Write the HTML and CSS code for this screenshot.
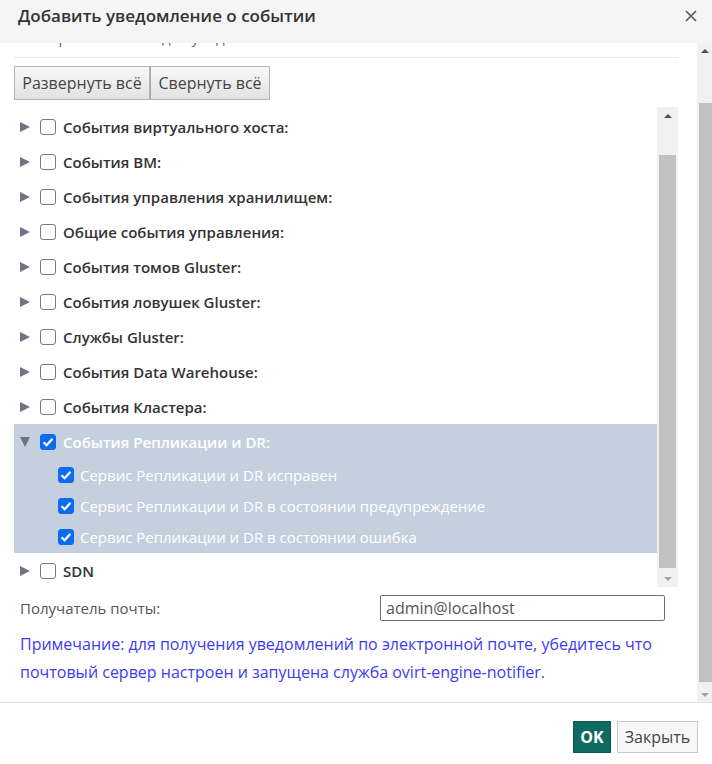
FILE: index.html
```html
<!DOCTYPE html>
<html lang="ru">
<head>
<meta charset="utf-8">
<title>Добавить уведомление о событии</title>
<link rel="stylesheet" href="styles.css">
</head>
<body>
<div class="dialog">
  <div class="header">
    <div class="title">Добавить уведомление о событии</div>
    <svg class="close" width="12" height="12" viewBox="0 0 12 12"><path d="M1 1L11 11M11 1L1 11" stroke="#5a5a5a" stroke-width="1.7" fill="none"/></svg>
  </div>
  <div class="body">
    <div class="content">
      <div class="intro"><span>Выберите события для уведомления:</span></div>
      <div class="rule"></div>
      <div class="btn-group">
        <button class="gbtn">Развернуть всё</button><button class="gbtn">Свернуть всё</button>
      </div>
      <div class="tree-box">
        <div class="tree">
          <div class="row"><span class="arrow right"></span><span class="cb"></span><span class="lbl">События виртуального хоста:</span></div>
          <div class="row"><span class="arrow right"></span><span class="cb"></span><span class="lbl">События ВМ:</span></div>
          <div class="row"><span class="arrow right"></span><span class="cb"></span><span class="lbl">События управления хранилищем:</span></div>
          <div class="row"><span class="arrow right"></span><span class="cb"></span><span class="lbl">Общие события управления:</span></div>
          <div class="row"><span class="arrow right"></span><span class="cb"></span><span class="lbl">События томов Gluster:</span></div>
          <div class="row"><span class="arrow right"></span><span class="cb"></span><span class="lbl">События ловушек Gluster:</span></div>
          <div class="row"><span class="arrow right"></span><span class="cb"></span><span class="lbl">Службы Gluster:</span></div>
          <div class="row"><span class="arrow right"></span><span class="cb"></span><span class="lbl">События Data Warehouse:</span></div>
          <div class="row"><span class="arrow right"></span><span class="cb"></span><span class="lbl">События Кластера:</span></div>
          <div class="selected">
            <div class="row"><span class="arrow down"></span><span class="cb on"><svg width="12" height="10" viewBox="0 0 12 10"><path d="M1.5 5.2L4.6 8.2L10.5 1.8" stroke="#fff" stroke-width="2.2" fill="none"/></svg></span><span class="lbl">События Репликации и DR:</span></div>
            <div class="child"><span class="cb on"><svg width="12" height="10" viewBox="0 0 12 10"><path d="M1.5 5.2L4.6 8.2L10.5 1.8" stroke="#fff" stroke-width="2.2" fill="none"/></svg></span><span class="clbl">Сервис Репликации и DR исправен</span></div>
            <div class="child"><span class="cb on"><svg width="12" height="10" viewBox="0 0 12 10"><path d="M1.5 5.2L4.6 8.2L10.5 1.8" stroke="#fff" stroke-width="2.2" fill="none"/></svg></span><span class="clbl">Сервис Репликации и DR в состоянии предупреждение</span></div>
            <div class="child"><span class="cb on"><svg width="12" height="10" viewBox="0 0 12 10"><path d="M1.5 5.2L4.6 8.2L10.5 1.8" stroke="#fff" stroke-width="2.2" fill="none"/></svg></span><span class="clbl">Сервис Репликации и DR в состоянии ошибка</span></div>
          </div>
          <div class="row"><span class="arrow right"></span><span class="cb"></span><span class="lbl">SDN</span></div>
        </div>
        <div class="sbar inner">
          <div class="sbtn"><span class="tri up"></span></div>
          <div class="strack"><div class="sthumb"></div></div>
          <div class="sbtn"><span class="tri dn"></span></div>
        </div>
      </div>
      <div class="email">
        <span class="elbl">Получатель почты:</span>
        <div class="input">admin@localhost</div>
      </div>
      <div class="note">Примечание: для получения уведомлений по электронной почте, убедитесь что почтовый сервер настроен и запущена служба ovirt-engine-notifier.</div>
    </div>
    <div class="sbar outer">
      <div class="sbtn"><span class="tri up"></span></div>
      <div class="strack"><div class="sthumb"></div></div>
      <div class="sbtn"><span class="tri dn"></span></div>
    </div>
  </div>
  <div class="footer">
    <button class="ok">OK</button>
    <button class="closebtn">Закрыть</button>
  </div>
</div>
</body>
</html>
```
FILE: styles.css
```css
* { box-sizing: border-box; }
html, body { margin: 0; padding: 0; background: #fff; }
body { font-family: "Open Sans", "Noto Sans", sans-serif; color: #333; }
.dialog { width: 712px; height: 764px; display: flex; flex-direction: column; overflow: hidden; }
.header { height: 43px; background: #f5f5f5; display: flex; align-items: center; justify-content: space-between; padding: 0 15px 0 18px; flex: none; }
.title { font-size: 17px; font-weight: 600; color: #333; margin-top: -12px; }
.close { margin-top: -12px; }
.body { height: 660px; flex: none; display: flex; border-bottom: 1px solid #e3e3e3; }
.content { flex: 1; min-width: 0; padding: 0 19px 0 14px; overflow: hidden; }
.intro { height: 14px; overflow: hidden; display: flex; align-items: flex-end; padding: 0 0 10px 6px; font-size: 15px; color: #666; }
.intro span { line-height: 20px; white-space: nowrap; }
.rule { border-top: 1px solid #e8e8e8; }
.btn-group { display: flex; margin-top: 8px; }
.gbtn { font-family: inherit; font-size: 16px; color: #444; height: 34px; padding: 0 2px; border: 1px solid #b5b5b5; background: linear-gradient(#f8f8f8, #e2e2e2); margin: 0; white-space: nowrap; }
.gbtn + .gbtn { border-left: 1px solid #a8a8a8; margin-left: 0; }
.gbtn:first-child { width: 136px; }
.gbtn:last-child { width: 120px; }
.tree-box { margin-top: 7px; height: 480px; display: flex; overflow: hidden; }
.tree { flex: 1; padding-top: 2px; }
.row { height: 35px; display: flex; align-items: center; padding-left: 6px; }
.arrow { flex: none; margin-right: 10px; }
.arrow.right { border-left: 10px solid #6f7580; border-top: 5px solid transparent; border-bottom: 5px solid transparent; width: 0; height: 0; }
.arrow.down { border-top: 10px solid #6f7580; border-left: 5px solid transparent; border-right: 5px solid transparent; width: 0; height: 0; }
.cb { width: 16px; height: 16px; border: 1px solid #7a7a7a; border-radius: 3px; background: #fff; flex: none; display: flex; align-items: center; justify-content: center; }
.cb.on { background: #0b6cf2; border-color: #0b6cf2; }
.lbl { font-size: 15px; font-weight: 600; color: #333; margin-left: 7px; white-space: nowrap; }
.selected { background: #c5d0df; padding-bottom: 1px; }
.selected .lbl { color: #fff; }
.child { height: 31px; display: flex; align-items: center; padding-left: 44px; }
.clbl { font-size: 15px; color: #fff; margin-left: 6px; white-space: nowrap; }
.sbar { display: flex; flex-direction: column; background: #f1f1f1; flex: none; }
.sbar.inner { width: 21px; padding: 0 2px; }
.sbar.outer { width: 15px; }
.sbtn { height: 17px; display: flex; align-items: center; justify-content: center; flex: none; }
.outer .sbtn { height: 15px; }
.strack { flex: 1; display: flex; flex-direction: column; }
.inner .strack { padding: 31px 0 2px; }
.outer .strack { padding: 45px 0 5px 2px; }
.sthumb { flex: 1; background: #c1c1c1; }
.tri { width: 0; height: 0; border-left: 4px solid transparent; border-right: 4px solid transparent; }
.tri.up { border-bottom: 4px solid #505050; }
.tri.dn { border-top: 4px solid #a3a3a3; }
.email { display: flex; align-items: center; justify-content: space-between; padding: 8px 13px 0 6px; }
.elbl { font-size: 15px; color: #555; }
.input { width: 285px; height: 26px; border: 1px solid #6f6f6f; border-radius: 2px; font-size: 16px; color: #555; padding: 0 5px; display: flex; align-items: center; }
.note { font-size: 16px; line-height: 28px; color: #3c3cf2; padding: 9px 0 0 6px; }
.footer { flex: 1; display: flex; justify-content: flex-end; align-items: flex-start; padding: 18px 14px 0 0; gap: 6px; }
.ok { font-family: inherit; font-size: 16px; font-weight: 700; color: #fff; background: #0f6b60; border: 1px solid #0a5a50; height: 32px; width: 38px; padding: 0; }
.closebtn { font-family: inherit; font-size: 16px; color: #444; background: #f7f7f7; border: 1px solid #c8c8c8; height: 32px; width: 81px; padding: 0; }
```
